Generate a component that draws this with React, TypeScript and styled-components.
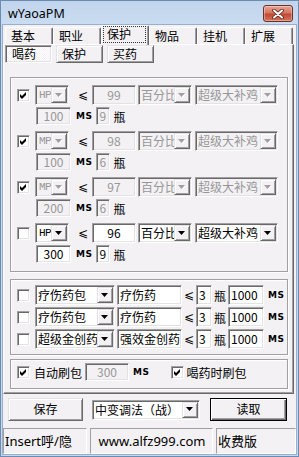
import styled, { createGlobalStyle, css } from 'styled-components';

const FACE = '#f3f1f4';
const GRAY_TEXT = '#979797';

const GlobalStyle = createGlobalStyle`
  html, body { margin: 0; padding: 0; }
  body {
    background: ${FACE};
    font-family: "Noto Sans CJK SC", "Noto Sans", sans-serif;
    font-size: 12px;
    color: #000;
  }
  * { box-sizing: border-box; }
`;

const sunken = css`
  border: 1px solid;
  border-color: #a0a0a0 #fff #fff #a0a0a0;
  box-shadow: inset 1px 1px #696969, inset -1px -1px #e3e3e3;
`;

const raised = css`
  border: 1px solid;
  border-color: #e3e3e3 #696969 #696969 #e3e3e3;
  box-shadow: inset 1px 1px #fff, inset -1px -1px #a0a0a0;
`;

const Window = styled.div`
  width: 299px;
  height: 457px;
  display: flex;
  flex-direction: column;
  border: 1px solid #6b8bb1;
  background: #c6d9f0;
  padding: 0 1px 1px;
`;

const TitleBar = styled.div`
  height: 23px;
  flex: none;
  display: flex;
  align-items: flex-start;
  justify-content: space-between;
  padding: 0 4px 0 6px;
  background: linear-gradient(#c0d4ec, #cadcf1);
`;

const Title = styled.span`
  font-family: "Noto Sans", sans-serif;
  font-size: 12.5px;
  line-height: 1;
  margin-top: 7px;
`;

const CloseButton = styled.div`
  width: 30px;
  height: 17px;
  margin-top: 4px;
  border: 1px solid #6e2f27;
  border-radius: 3px;
  background: linear-gradient(#e7a597, #d67561 45%, #c24a33 55%, #d0765f);
  box-shadow: inset 0 0 0 1px rgba(255, 255, 255, 0.35);
  display: flex;
  align-items: center;
  justify-content: center;
`;

const Client = styled.div`
  flex: 1;
  display: flex;
  flex-direction: column;
  background: ${FACE};
  border: 1px solid #97afcd;
`;

const TabStrip = styled.div`
  height: 19px;
  flex: none;
  display: flex;
  align-items: flex-end;
  padding-left: 2px;
  position: relative;
  z-index: 1;
`;

const Tab = styled.div<{ $active?: boolean }>`
  position: relative;
  width: 48px;
  height: ${(p) => (p.$active ? 20 : 17)}px;
  margin-bottom: ${(p) => (p.$active ? -1 : 0)}px;
  border-top: 1px solid #fff;
  border-left: 1px solid #fff;
  border-right: 1px solid #696969;
  border-radius: 2px 2px 0 0;
  box-shadow: inset -1px 0 #a0a0a0;
  background: ${FACE};
  padding-left: 5px;
  line-height: 15px;
  white-space: nowrap;

  ${(p) =>
    p.$active &&
    css`
      &::after {
        content: '';
        position: absolute;
        inset: 0 2px 2px 1px;
        border: 1px dotted #333;
      }
    `}
`;

const TabPanel = styled.div`
  width: 291px;
  height: 350px;
  flex: none;
  display: flex;
  flex-direction: column;
  border: 1px solid;
  border-color: #fff #696969 #696969 #fff;
  box-shadow: inset -1px -1px #a0a0a0;
`;

const SubTabs = styled.div`
  display: flex;
  gap: 4px;
  padding-left: 1px;
`;

const SubTab = styled.div<{ $pressed?: boolean }>`
  width: 47px;
  height: 18px;
  line-height: 16px;
  padding-left: ${(p) => (p.$pressed ? 6 : 5)}px;
  ${(p) =>
    p.$pressed
      ? css`
          ${sunken};
          background: repeating-conic-gradient(#fff 0 25%, ${FACE} 0 50%) 0 0 / 2px 2px;
        `
      : css`
          ${raised};
          background: ${FACE};
        `}
`;

const GroupBox = styled.div`
  width: 278px;
  margin-left: 6px;
  border: 1px solid #a0a0a0;
  box-shadow: inset 1px 1px #fff, 1px 1px #fff;
  display: flex;
  flex-direction: column;
`;

const PotionGroup = styled(GroupBox)`
  margin-top: 14px;
  padding: 7px 0 8px 6px;
  gap: 6px;
`;

const PackGroup = styled(GroupBox)`
  margin-top: 7px;
  padding: 5px 0 5px 6px;
  gap: 2px;
`;

const RefreshGroup = styled(GroupBox)`
  margin-top: 4px;
  padding: 2px 0 6px 6px;
`;

const Unit = styled.div`
  display: flex;
  flex-direction: column;
  gap: 2px;
`;

const Line = styled.div`
  height: 20px;
  display: flex;
  align-items: center;
`;

const SubLine = styled.div`
  height: 18px;
  display: flex;
  align-items: center;
  padding-left: 19px;
`;

const CheckBox = styled.span<{ $gap?: number }>`
  width: 13px;
  height: 13px;
  flex: none;
  margin-left: ${(p) => p.$gap ?? 0}px;
  ${sunken};
  background: #fff;
  display: flex;
  align-items: center;
  justify-content: center;
`;

const ComboBox = styled.div<{ $w: number; $gap?: number; $disabled?: boolean }>`
  width: ${(p) => p.$w}px;
  height: 20px;
  flex: none;
  margin-left: ${(p) => p.$gap ?? 0}px;
  display: flex;
  padding: 1px;
  ${sunken};
  background: ${(p) => (p.$disabled ? FACE : '#fff')};
  color: ${(p) => (p.$disabled ? GRAY_TEXT : '#000')};
`;

const ComboText = styled.span<{ $mono?: boolean }>`
  flex: 1;
  min-width: 0;
  overflow: hidden;
  white-space: nowrap;
  padding-left: 1px;
  line-height: 16px;
  ${(p) =>
    p.$mono &&
    css`
      font-family: "Liberation Mono", monospace;
      font-size: 11px;
      letter-spacing: -0.6px;
      padding-left: 2px;
    `}
`;

const DropButton = styled.span`
  width: 16px;
  height: 16px;
  flex: none;
  ${raised};
  background: ${FACE};
  display: flex;
  align-items: center;
  justify-content: center;
`;

const Edit = styled.div<{
  $w: number;
  $h?: number;
  $gap?: number;
  $disabled?: boolean;
  $center?: boolean;
}>`
  width: ${(p) => p.$w}px;
  height: ${(p) => p.$h ?? 20}px;
  flex: none;
  margin-left: ${(p) => p.$gap ?? 0}px;
  ${sunken};
  background: ${(p) => (p.$disabled ? FACE : '#fff')};
  color: ${(p) => (p.$disabled ? GRAY_TEXT : '#000')};
  text-align: ${(p) => (p.$center ? 'center' : 'left')};
  padding: 0 2px;
  line-height: ${(p) => (p.$h ?? 20) - 3}px;
  white-space: nowrap;
  overflow: hidden;
`;

const LessEq = styled.span<{ $gap?: number }>`
  width: 14px;
  flex: none;
  margin-left: ${(p) => p.$gap ?? 0}px;
  text-align: center;
  font-family: "DejaVu Sans", sans-serif;
  font-size: 12px;
`;

const Bottle = styled.span<{ $gap?: number }>`
  flex: none;
  margin-left: ${(p) => p.$gap ?? 0}px;
`;

const MsLabel = styled.span<{ $gap?: number; $right?: number }>`
  flex: none;
  margin-left: ${(p) => p.$gap ?? 0}px;
  margin-right: ${(p) => p.$right ?? 0}px;
  font-family: "DejaVu Sans", sans-serif;
  font-size: 9px;
  font-weight: bold;
  letter-spacing: 0.5px;
`;

const Label = styled.span<{ $gap?: number }>`
  flex: none;
  margin-left: ${(p) => p.$gap ?? 0}px;
`;

const BottomRow = styled.div`
  display: flex;
  align-items: center;
  margin-top: 4px;
  height: 23px;
`;

const PushButton = styled.div<{ $w: number; $gap?: number; $default?: boolean }>`
  width: ${(p) => p.$w}px;
  height: 23px;
  margin-left: ${(p) => p.$gap ?? 0}px;
  background: ${FACE};
  text-align: center;
  line-height: 20px;
  ${(p) =>
    p.$default
      ? css`
          border: 1px solid #000;
          box-shadow: inset 1px 1px #fff, inset -1px -1px #696969, inset -2px -2px #a0a0a0;
        `
      : raised}
`;

const StatusBar = styled.div`
  margin-top: 7px;
  height: 26px;
  display: flex;
  gap: 3px;
  font-family: "Noto Sans", "Noto Sans CJK SC", sans-serif;
  font-size: 13px;
`;

const StatusPanel = styled.div<{ $w?: number; $center?: boolean }>`
  ${(p) => (p.$w ? `width: ${p.$w}px; flex: none;` : 'flex: 1;')}
  border: 1px solid;
  border-color: #a0a0a0 #fff #fff #a0a0a0;
  line-height: 24px;
  padding-left: 1px;
  white-space: nowrap;
  overflow: hidden;
  text-align: ${(p) => (p.$center ? 'center' : 'left')};
`;

const Check = () => (
  <svg width="7" height="7" viewBox="0 0 7 7">
    <polygon points="0,2 2,4 6,0 6,3 2,7 0,5" fill="#000" />
  </svg>
);

const Arrow = ({ disabled }: { disabled?: boolean }) => (
  <svg width="8" height="5" viewBox="0 0 8 5">
    {disabled && <polygon points="1,1 8,1 4.5,5" fill="#fff" />}
    <polygon points="0,0 7,0 3.5,4" fill={disabled ? '#a0a0a0' : '#000'} />
  </svg>
);

const CloseX = () => (
  <svg width="12" height="10" viewBox="0 0 12 10">
    <path d="M2 1.5 L10 8.5 M10 1.5 L2 8.5" stroke="#5a2018" strokeWidth="3.6" strokeLinecap="round" />
    <path d="M2 1.5 L10 8.5 M10 1.5 L2 8.5" stroke="#fff" strokeWidth="2" strokeLinecap="round" />
  </svg>
);

type ComboProps = { w: number; gap?: number; disabled?: boolean; mono?: boolean; text: string };

const Combo = ({ w, gap, disabled, mono, text }: ComboProps) => (
  <ComboBox $w={w} $gap={gap} $disabled={disabled}>
    <ComboText $mono={mono}>{text}</ComboText>
    <DropButton>
      <Arrow disabled={disabled} />
    </DropButton>
  </ComboBox>
);

const tabs = ['基本', '职业', '保护', '物品', '挂机', '扩展'];
const subTabs = ['喝药', '保护', '买药'];

const potions = [
  { checked: true, stat: 'HP', value: '99', delay: '100', count: '9', disabled: true },
  { checked: true, stat: 'MP', value: '98', delay: '100', count: '6', disabled: true },
  { checked: true, stat: 'MP', value: '97', delay: '200', count: '6', disabled: true },
  { checked: false, stat: 'HP', value: '96', delay: '300', count: '9', disabled: false },
];

const packs = [
  { item: '疗伤药包', name: '疗伤药' },
  { item: '疗伤药包', name: '疗伤药' },
  { item: '超级金创药', name: '强效金创药' },
];

export default function App() {
  return (
    <>
      <GlobalStyle />
      <Window>
        <TitleBar>
          <Title>wYaoaPM</Title>
          <CloseButton>
            <CloseX />
          </CloseButton>
        </TitleBar>
        <Client>
          <TabStrip>
            {tabs.map((t) => (
              <Tab key={t} $active={t === '保护'}>
                {t}
              </Tab>
            ))}
          </TabStrip>
          <TabPanel>
            <SubTabs>
              {subTabs.map((t, i) => (
                <SubTab key={t} $pressed={i === 0}>
                  {t}
                </SubTab>
              ))}
            </SubTabs>

            <PotionGroup>
              {potions.map((p, i) => (
                <Unit key={i}>
                  <Line>
                    <CheckBox>{p.checked && <Check />}</CheckBox>
                    <Combo w={34} gap={5} disabled={p.disabled} mono text={p.stat} />
                    <LessEq $gap={7}>⩽</LessEq>
                    <Edit $w={44} $gap={2} $disabled={p.disabled} $center>
                      {p.value}
                    </Edit>
                    <Combo w={54} gap={2} disabled={p.disabled} text="百分比" />
                    <Combo w={83} gap={3} disabled={p.disabled} text="超级大补鸡" />
                  </Line>
                  <SubLine>
                    <Edit $w={35} $h={18} $disabled={p.disabled} $center>
                      {p.delay}
                    </Edit>
                    <MsLabel $gap={5} $right={4}>
                      MS
                    </MsLabel>
                    <Edit $w={14} $h={18} $disabled={p.disabled}>
                      {p.count}
                    </Edit>
                    <Bottle $gap={3}>瓶</Bottle>
                  </SubLine>
                </Unit>
              ))}
            </PotionGroup>

            <PackGroup>
              {packs.map((p, i) => (
                <Line key={i}>
                  <CheckBox />
                  <Combo w={80} gap={5} text={p.item} />
                  <Edit $w={65} $gap={2}>
                    {p.name}
                  </Edit>
                  <LessEq>⩽</LessEq>
                  <Edit $w={16}>3</Edit>
                  <Bottle $gap={2}>瓶</Bottle>
                  <Edit $w={36} $gap={2}>
                    1000
                  </Edit>
                  <MsLabel $gap={4}>MS</MsLabel>
                </Line>
              ))}
            </PackGroup>

            <RefreshGroup>
              <Line>
                <CheckBox>
                  <Check />
                </CheckBox>
                <Label $gap={4}>自动刷包</Label>
                <Edit $w={44} $h={18} $gap={3} $disabled $center>
                  300
                </Edit>
                <MsLabel $gap={4}>MS</MsLabel>
                <CheckBox $gap={22}>
                  <Check />
                </CheckBox>
                <Label $gap={2}>喝药时刷包</Label>
              </Line>
            </RefreshGroup>
          </TabPanel>

          <BottomRow>
            <PushButton $w={75} $gap={5}>
              保存
            </PushButton>
            <Combo w={108} gap={9} text="中变调法（战）" />
            <PushButton $w={77} $gap={10} $default>
              读取
            </PushButton>
          </BottomRow>

          <StatusBar>
            <StatusPanel $w={84}>Insert呼/隐</StatusPanel>
            <StatusPanel $w={123} $center>
              www.alfz999.com
            </StatusPanel>
            <StatusPanel>收费版</StatusPanel>
          </StatusBar>
        </Client>
      </Window>
    </>
  );
}
